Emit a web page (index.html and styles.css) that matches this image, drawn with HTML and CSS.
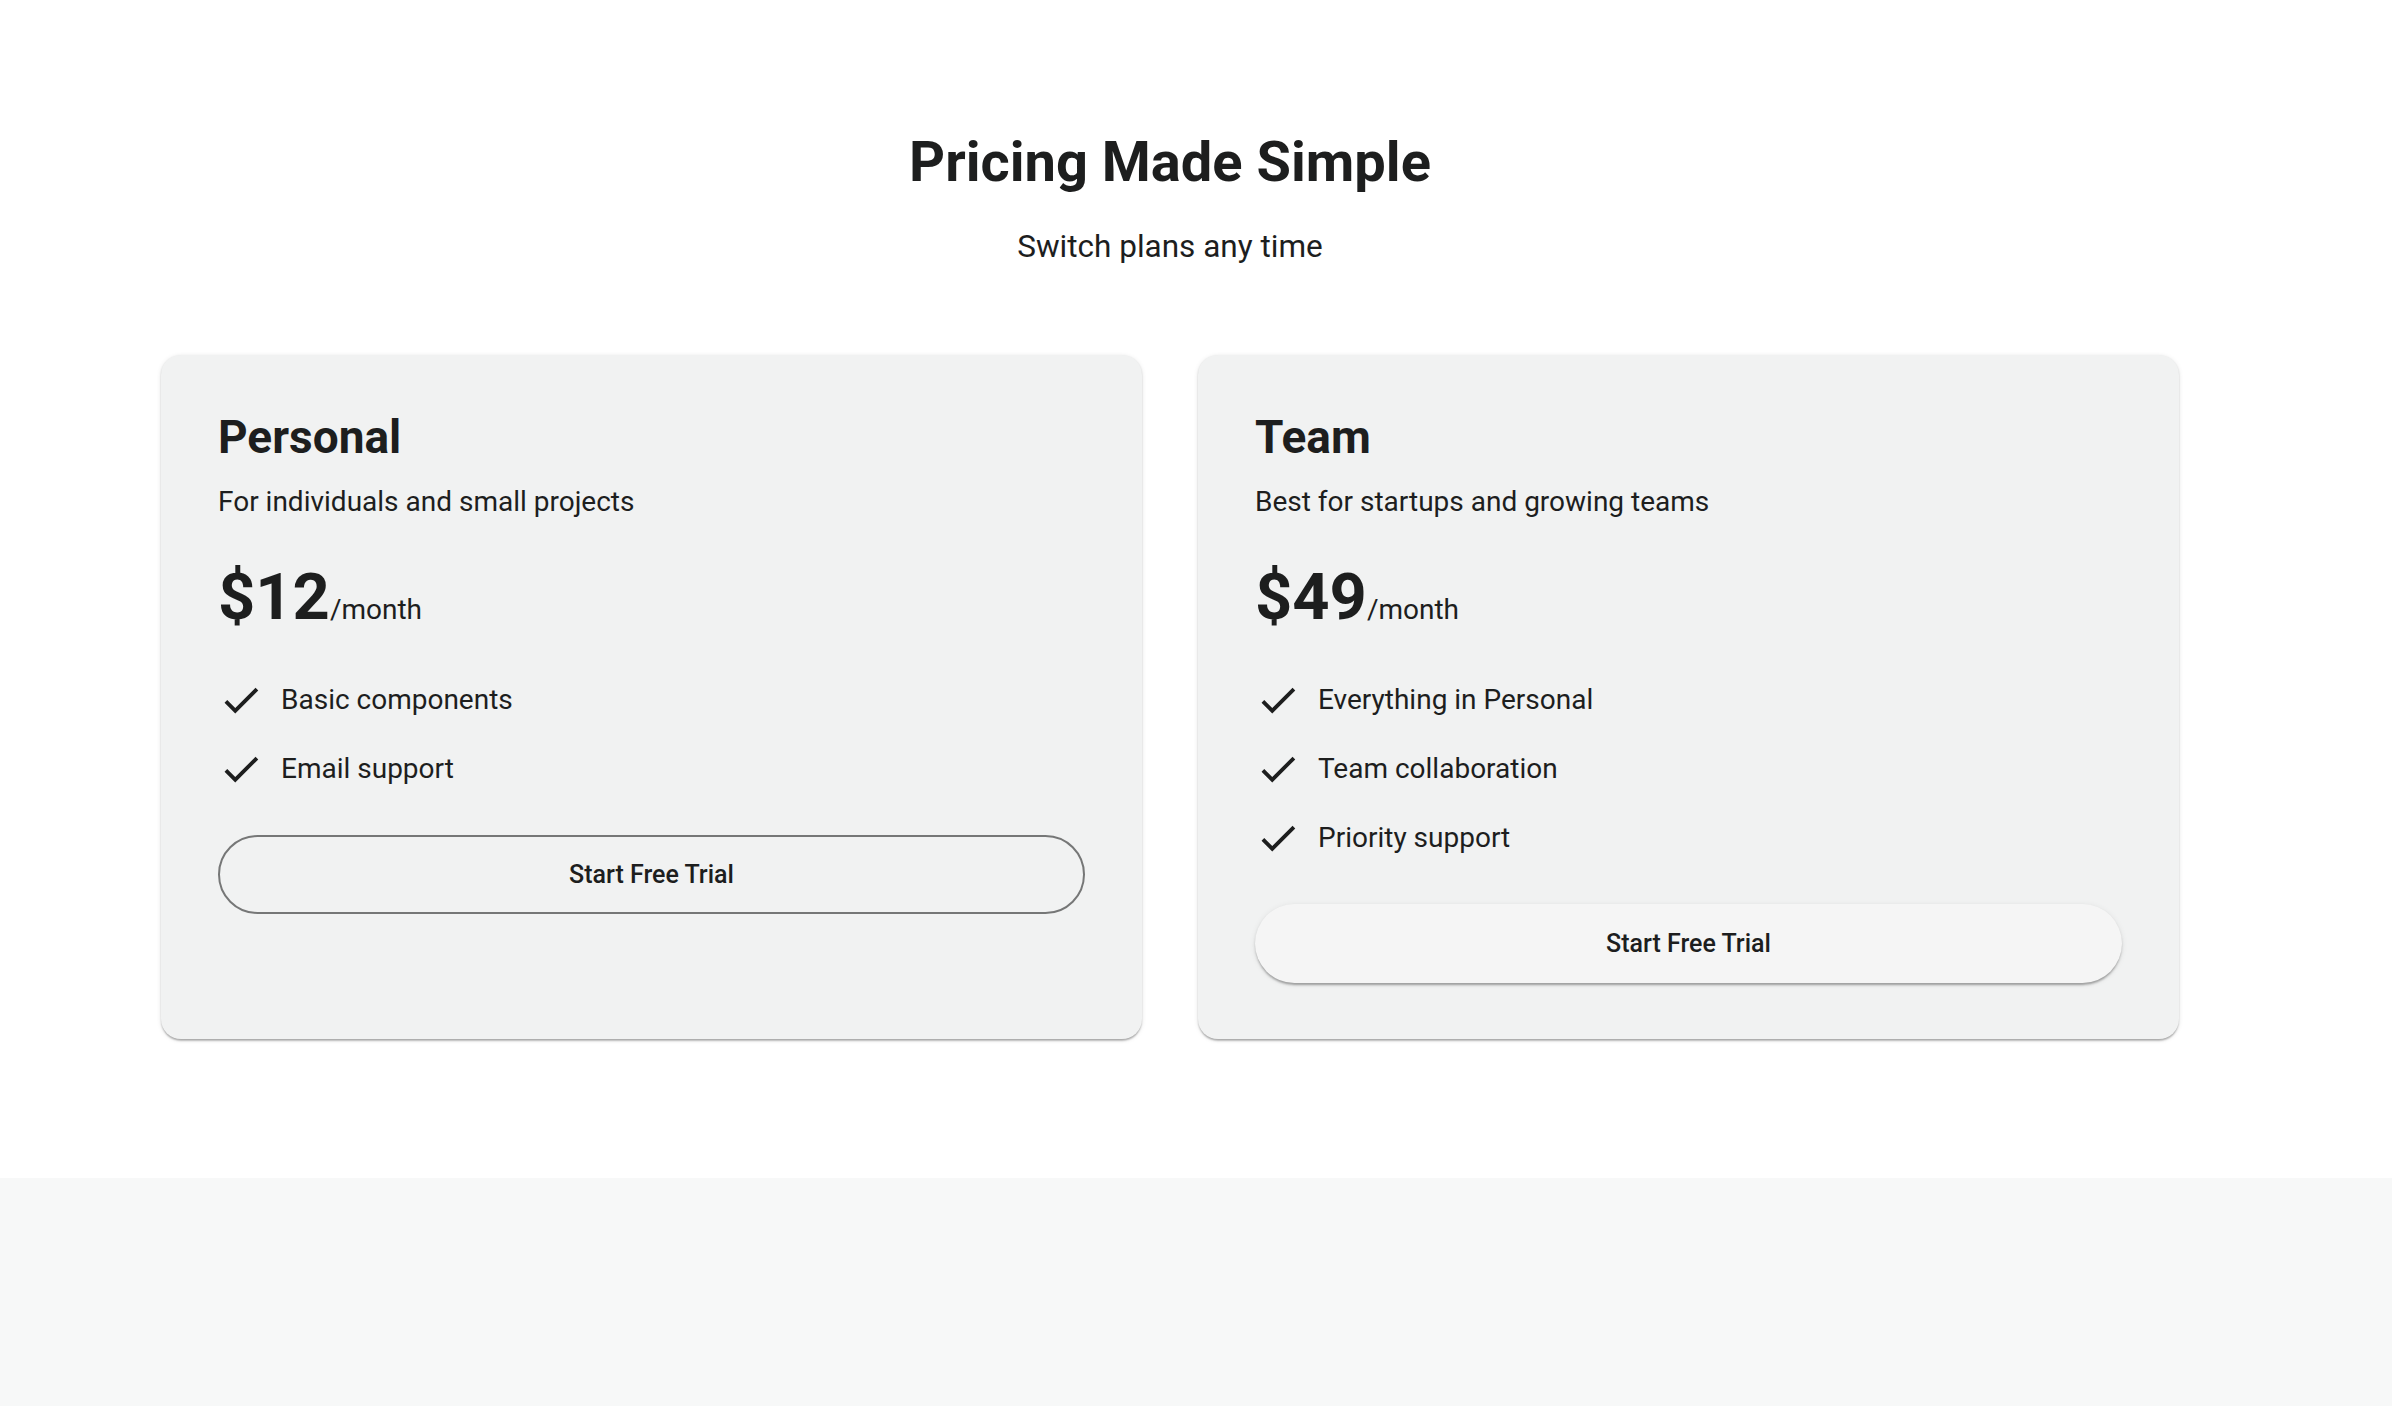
FILE: index.html
```html
<!DOCTYPE html>
<html lang="en">
<head>
<meta charset="utf-8">
<title>Pricing Made Simple</title>
<link rel="stylesheet" href="styles.css">
</head>
<body>
<main class="pricing">
  <header class="pricing-header">
    <h1 class="pricing-title">Pricing Made Simple</h1>
    <p class="pricing-subtitle">Switch plans any time</p>
  </header>
  <div class="plans">
    <section class="plan">
      <h2 class="plan-name">Personal</h2>
      <p class="plan-desc">For individuals and small projects</p>
      <div class="plan-price"><span class="amount">$12</span><span class="period">/month</span></div>
      <ul class="features">
        <li class="feature"><svg class="check" viewBox="0 0 24 24"><path d="M9 16.17 4.83 12l-1.42 1.41L9 19 21 7l-1.41-1.41z"/></svg><span>Basic components</span></li>
        <li class="feature"><svg class="check" viewBox="0 0 24 24"><path d="M9 16.17 4.83 12l-1.42 1.41L9 19 21 7l-1.41-1.41z"/></svg><span>Email support</span></li>
      </ul>
      <button class="btn btn-outlined">Start Free Trial</button>
    </section>
    <section class="plan">
      <h2 class="plan-name">Team</h2>
      <p class="plan-desc">Best for startups and growing teams</p>
      <div class="plan-price"><span class="amount">$49</span><span class="period">/month</span></div>
      <ul class="features">
        <li class="feature"><svg class="check" viewBox="0 0 24 24"><path d="M9 16.17 4.83 12l-1.42 1.41L9 19 21 7l-1.41-1.41z"/></svg><span>Everything in Personal</span></li>
        <li class="feature"><svg class="check" viewBox="0 0 24 24"><path d="M9 16.17 4.83 12l-1.42 1.41L9 19 21 7l-1.41-1.41z"/></svg><span>Team collaboration</span></li>
        <li class="feature"><svg class="check" viewBox="0 0 24 24"><path d="M9 16.17 4.83 12l-1.42 1.41L9 19 21 7l-1.41-1.41z"/></svg><span>Priority support</span></li>
      </ul>
      <button class="btn btn-raised">Start Free Trial</button>
    </section>
  </div>
</main>
<footer class="page-footer"></footer>
</body>
</html>
```
FILE: styles.css
```css
* { box-sizing: border-box; }
html, body { margin: 0; padding: 0; }
body {
  font-family: Roboto, "Noto Sans", "Liberation Sans", sans-serif;
  color: #1d1e1e;
  background: #ffffff;
}
.pricing {
  height: 1178px;
  padding: 129px 52px 0 0;
}
.pricing-header {
  text-align: center;
}
.pricing-title {
  margin: 0;
  font-size: 56px;
  line-height: 1.2;
  font-weight: 700;
}
.pricing-subtitle {
  margin: 27px 0 0;
  font-size: 31.5px;
  line-height: 1.5;
  font-weight: 400;
}
.plans {
  max-width: 2018px;
  margin: 85px auto 0;
  display: grid;
  grid-template-columns: 1fr 1fr;
  gap: 56px;
}
.plan {
  background: #f1f2f2;
  border-radius: 20px;
  padding: 55px 57px 56px;
  display: flex;
  flex-direction: column;
  align-items: stretch;
  box-shadow: 0 3px 2px -1px rgba(0,0,0,0.2), 0 1px 2px 0 rgba(0,0,0,0.14), 0 1px 5px 0 rgba(0,0,0,0.1);
}
.plan-name {
  margin: 0;
  font-size: 46px;
  line-height: 1.2;
  font-weight: 700;
}
.plan-desc {
  margin: 15px 0 0;
  font-size: 28px;
  line-height: 1.5;
}
.plan-price {
  margin-top: 35px;
  display: flex;
  align-items: baseline;
}
.amount {
  font-size: 65px;
  line-height: 1.2;
  font-weight: 700;
}
.period {
  font-size: 28px;
  line-height: 1.2;
}
.features {
  list-style: none;
  margin: 41.5px 0 0;
  padding: 0;
  display: flex;
  flex-direction: column;
  gap: 23px;
}
.feature {
  display: flex;
  align-items: center;
  height: 46px;
  font-size: 28px;
  line-height: 1.2;
}
.check {
  width: 46px;
  height: 46px;
  fill: currentColor;
  flex: none;
  margin-right: 17px;
}
.btn {
  margin-top: 43px;
  height: 79px;
  border-radius: 40px;
  font-family: inherit;
  font-size: 25px;
  font-weight: 500;
  color: #1d1e1e;
  cursor: pointer;
}
.btn-outlined {
  background: transparent;
  border: 2px solid #767777;
}
.btn-raised {
  background: #f5f5f5;
  border: none;
  box-shadow: 0 3px 2px -1px rgba(0,0,0,0.22), 0 2px 3px 0 rgba(0,0,0,0.12), 0 1px 6px 0 rgba(0,0,0,0.08);
}
.page-footer {
  height: 228px;
  background: #f7f8f8;
}
```
